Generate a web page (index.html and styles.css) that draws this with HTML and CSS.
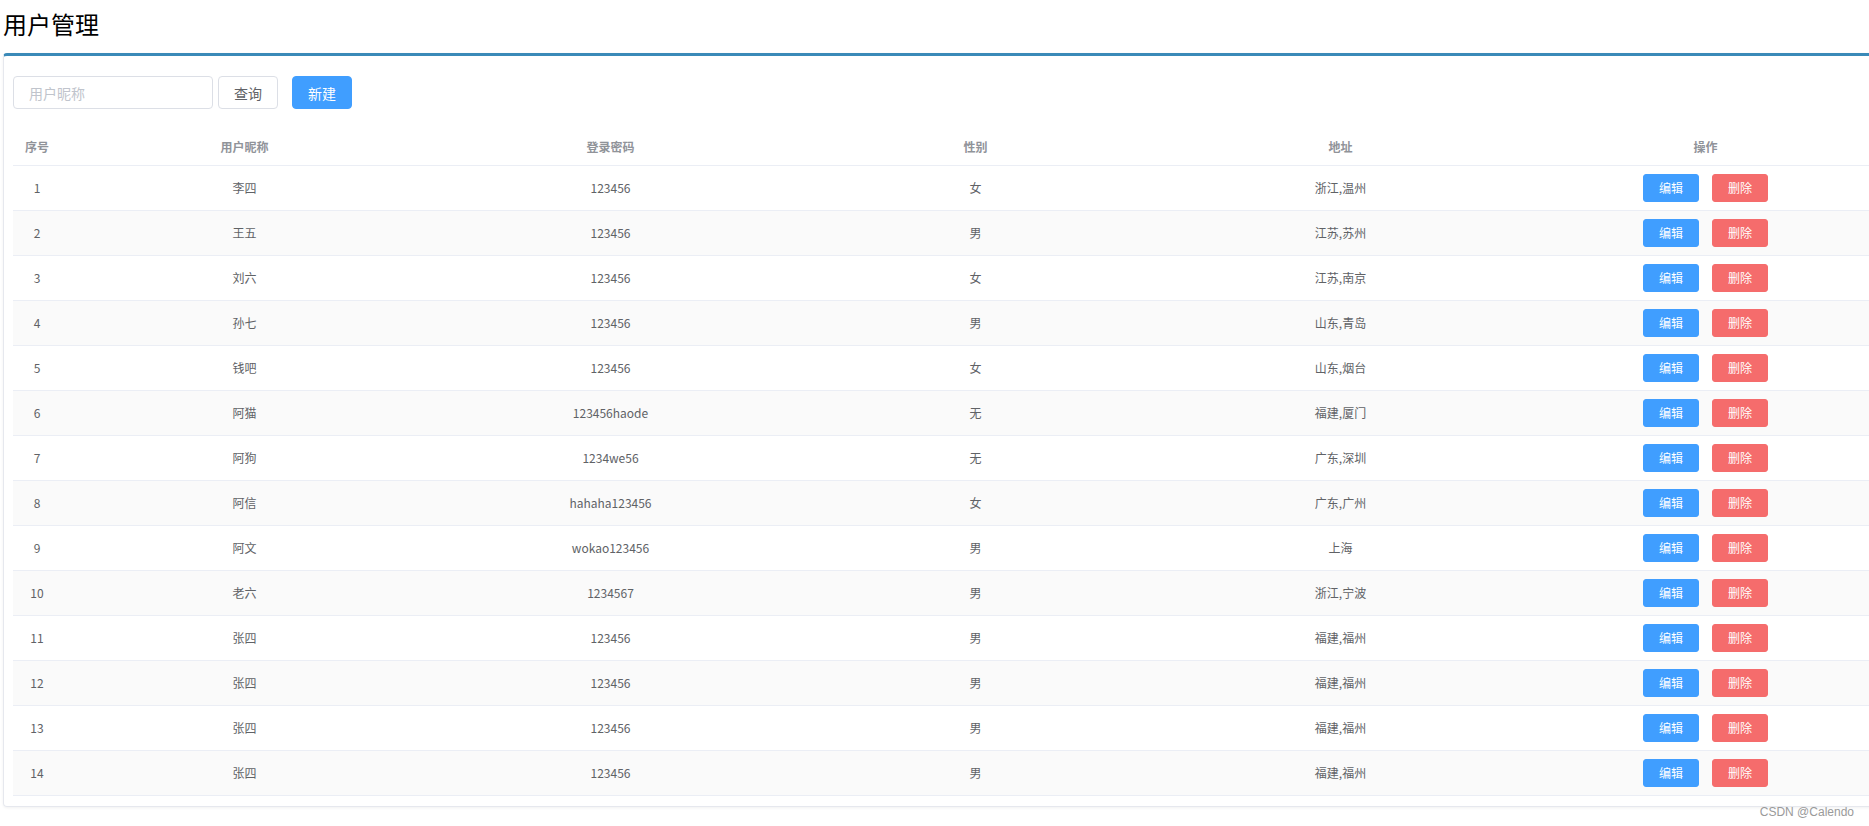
FILE: index.html
```html
<!DOCTYPE html>
<html lang="zh-CN">
<head>
<meta charset="utf-8">
<title>用户管理</title>
<link rel="stylesheet" href="styles.css">
</head>
<body>
<div class="page">
  <h2 class="title">用户管理</h2>
  <div class="card">
    <div class="toolbar">
      <input class="search" type="text" placeholder="用户昵称">
      <button class="btn btn-default">查询</button>
      <button class="btn btn-primary">新建</button>
    </div>
    <table class="grid">
      <colgroup>
        <col class="c-idx"><col class="c-name"><col class="c-col"><col class="c-col"><col class="c-col"><col class="c-col">
      </colgroup>
      <thead>
        <tr><th>序号</th><th>用户昵称</th><th>登录密码</th><th>性别</th><th>地址</th><th>操作</th></tr>
      </thead>
      <tbody>
        <tr><td>1</td><td>李四</td><td>123456</td><td>女</td><td>浙江,温州</td><td><button class="mini edit">编辑</button><button class="mini del">删除</button></td></tr>
        <tr><td>2</td><td>王五</td><td>123456</td><td>男</td><td>江苏,苏州</td><td><button class="mini edit">编辑</button><button class="mini del">删除</button></td></tr>
        <tr><td>3</td><td>刘六</td><td>123456</td><td>女</td><td>江苏,南京</td><td><button class="mini edit">编辑</button><button class="mini del">删除</button></td></tr>
        <tr><td>4</td><td>孙七</td><td>123456</td><td>男</td><td>山东,青岛</td><td><button class="mini edit">编辑</button><button class="mini del">删除</button></td></tr>
        <tr><td>5</td><td>钱吧</td><td>123456</td><td>女</td><td>山东,烟台</td><td><button class="mini edit">编辑</button><button class="mini del">删除</button></td></tr>
        <tr><td>6</td><td>阿猫</td><td>123456haode</td><td>无</td><td>福建,厦门</td><td><button class="mini edit">编辑</button><button class="mini del">删除</button></td></tr>
        <tr><td>7</td><td>阿狗</td><td>1234we56</td><td>无</td><td>广东,深圳</td><td><button class="mini edit">编辑</button><button class="mini del">删除</button></td></tr>
        <tr><td>8</td><td>阿信</td><td>hahaha123456</td><td>女</td><td>广东,广州</td><td><button class="mini edit">编辑</button><button class="mini del">删除</button></td></tr>
        <tr><td>9</td><td>阿文</td><td>wokao123456</td><td>男</td><td>上海</td><td><button class="mini edit">编辑</button><button class="mini del">删除</button></td></tr>
        <tr><td>10</td><td>老六</td><td>1234567</td><td>男</td><td>浙江,宁波</td><td><button class="mini edit">编辑</button><button class="mini del">删除</button></td></tr>
        <tr><td>11</td><td>张四</td><td>123456</td><td>男</td><td>福建,福州</td><td><button class="mini edit">编辑</button><button class="mini del">删除</button></td></tr>
        <tr><td>12</td><td>张四</td><td>123456</td><td>男</td><td>福建,福州</td><td><button class="mini edit">编辑</button><button class="mini del">删除</button></td></tr>
        <tr><td>13</td><td>张四</td><td>123456</td><td>男</td><td>福建,福州</td><td><button class="mini edit">编辑</button><button class="mini del">删除</button></td></tr>
        <tr><td>14</td><td>张四</td><td>123456</td><td>男</td><td>福建,福州</td><td><button class="mini edit">编辑</button><button class="mini del">删除</button></td></tr>
      </tbody>
    </table>
  </div>
  <div class="watermark">CSDN @Calendo</div>
</div>
</body>
</html>
```

FILE: styles.css
```css
html, body {
  margin: 0;
  padding: 0;
  overflow: hidden;
  background: #fff;
}
body {
  font-family: "Noto Sans CJK SC", "Noto Sans", sans-serif;
  color: #606266;
}
.page {
  position: relative;
  width: 1869px;
  height: 826px;
  padding-left: 3px;
  box-sizing: border-box;
}
.title {
  margin: 0;
  padding-top: 8px;
  font-size: 24px;
  line-height: 32px;
  font-weight: 400;
  color: #000;
  height: 45px;
  box-sizing: border-box;
}
.card {
  width: 1895px;
  box-sizing: border-box;
  border: 1px solid #e6e8ee;
  border-top: 3px solid #3a8ab8;
  border-radius: 4px;
  padding: 20px 9px 10px 9px;
  box-shadow: 0 1px 3px rgba(0, 0, 0, 0.06);
  margin-top: 8px;
}
.toolbar {
  display: flex;
  align-items: center;
  height: 33px;
}
.search {
  width: 200px;
  height: 33px;
  box-sizing: border-box;
  border: 1px solid #dcdfe6;
  border-radius: 4px;
  padding: 0 15px;
  font-family: inherit;
  font-size: 14px;
  color: #606266;
  outline: none;
}
.search::placeholder {
  color: #c0c4cc;
}
.btn {
  width: 60px;
  height: 33px;
  box-sizing: border-box;
  border-radius: 4px;
  font-family: inherit;
  font-size: 14px;
  padding: 0;
  cursor: pointer;
}
.btn-default {
  margin-left: 5px;
  background: #fff;
  border: 1px solid #dcdfe6;
  color: #606266;
}
.btn-primary {
  margin-left: 14px;
  background: #409eff;
  border: 1px solid #409eff;
  color: #fff;
}
.grid {
  margin-top: 20px;
  width: 1875px;
  table-layout: fixed;
  border-collapse: separate;
  border-spacing: 0;
  font-size: 12px;
}
.c-idx { width: 48px; }
.c-name { width: 367px; }
.c-col { width: 365px; }
.grid th {
  height: 36px;
  padding: 0;
  line-height: 36px;
  color: #909399;
  font-weight: 700;
  text-align: center;
  border-bottom: 1px solid #ebeef5;
}
.grid td {
  padding: 0;
  height: 44px;
  line-height: 44px;
  text-align: center;
  color: #606266;
  border-bottom: 1px solid #ebeef5;
}
.grid tbody tr:nth-child(even) td {
  background: #fafafa;
}
.mini {
  display: inline-block;
  vertical-align: top;
  margin-top: 8px;
  width: 56px;
  height: 28px;
  box-sizing: border-box;
  padding: 0;
  border-radius: 3px;
  font-family: inherit;
  font-size: 12px;
  line-height: 26px;
  color: #fff;
  cursor: pointer;
}
.edit {
  background: #409eff;
  border: 1px solid #409eff;
}
.del {
  margin-left: 13px;
  background: #f56c6c;
  border: 1px solid #f56c6c;
}
.watermark {
  position: absolute;
  right: 15px;
  bottom: 7px;
  font-family: "Liberation Sans", Arial, sans-serif;
  font-size: 12px;
  line-height: 14px;
  color: #9a9a9a;
}
```
